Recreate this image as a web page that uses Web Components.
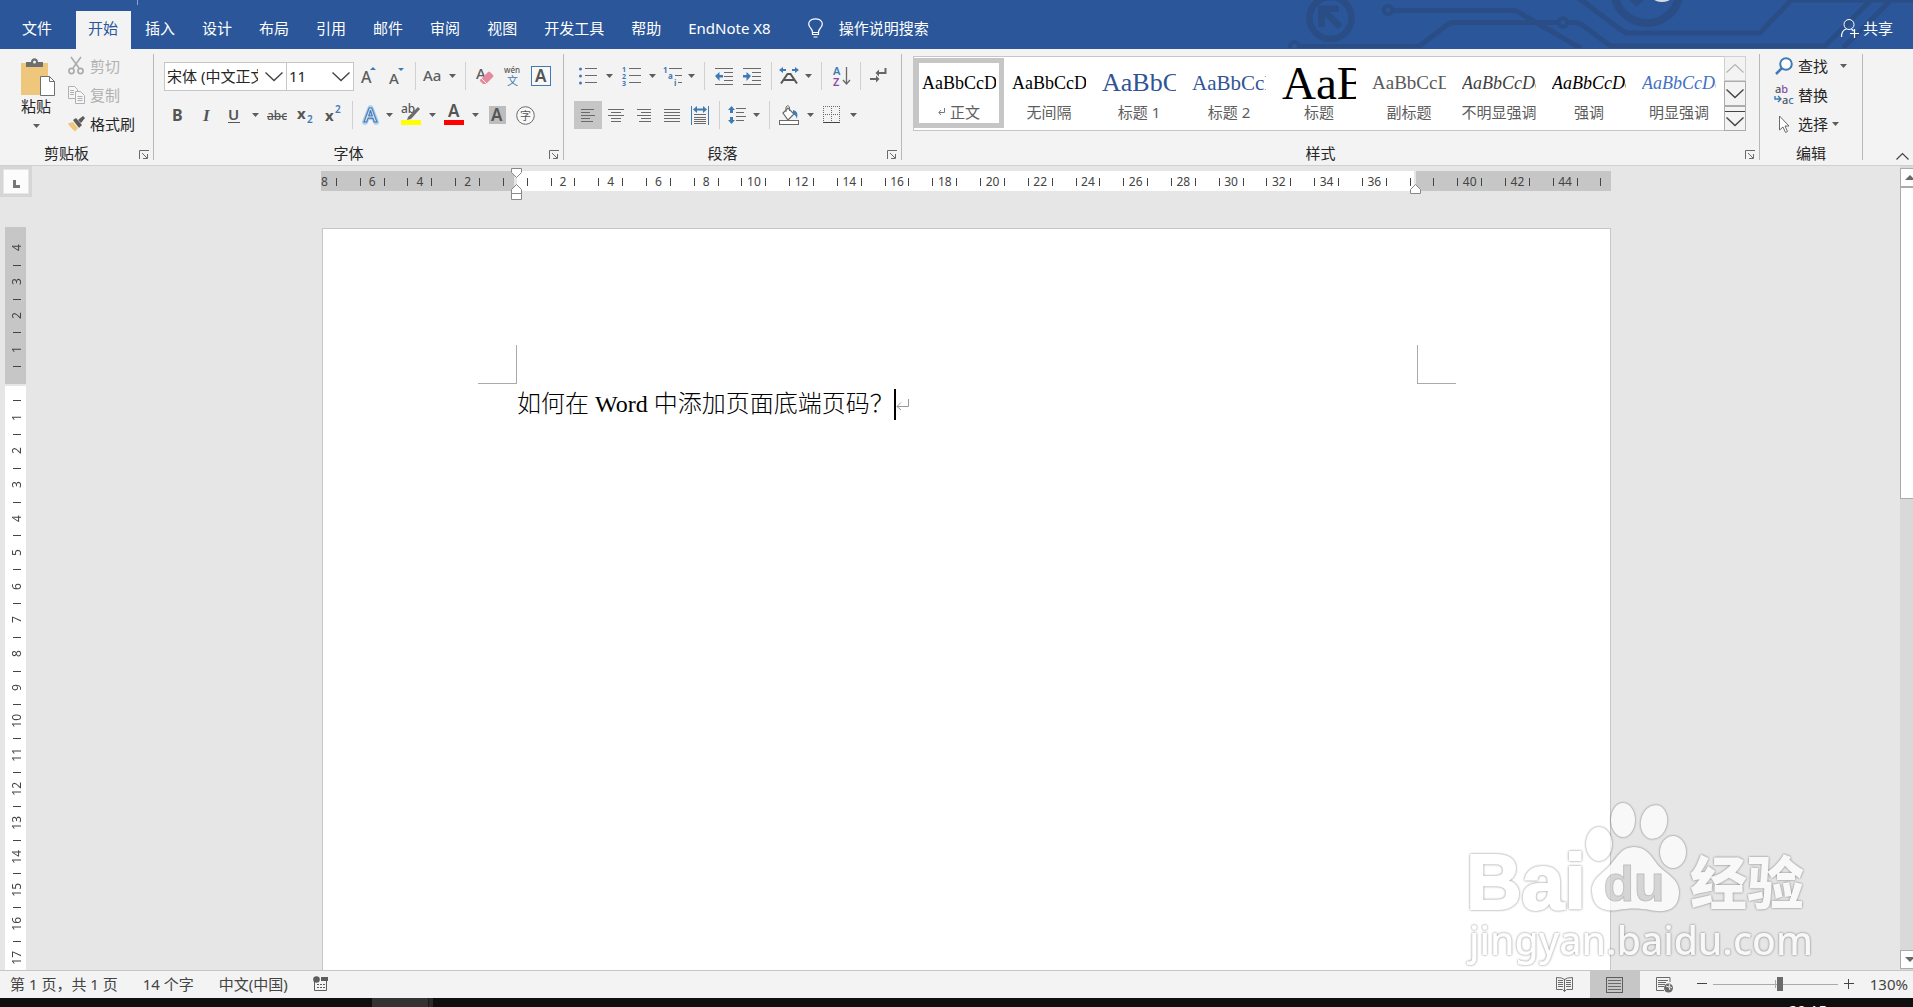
<!DOCTYPE html>
<html lang="zh-CN">
<head>
<meta charset="utf-8">
<title>Word</title>
<style>
  html, body { margin: 0; height: 100%; }
  body {
    font: 15px/20px "Noto Sans", "Noto Sans CJK SC", sans-serif;
    color: #262626;
    overflow: hidden;
  }
</style>
</head>
<body>
<word-app></word-app>

<script>
const define = (name, css, html, setup) => {
  const tpl = document.createElement('template');
  tpl.innerHTML = `<style>*{box-sizing:border-box}
    button,select,input{font:inherit;color:inherit;margin:0;padding:0;border:0;background:none;border-radius:0}
    ${css}</style>${html}`;
  customElements.define(name, class extends HTMLElement {
    constructor() {
      super();
      this.attachShadow({ mode: 'open' }).append(tpl.content.cloneNode(true));
    }
    connectedCallback() { if (setup) setup(this, this.shadowRoot); }
  });
};

/* ---------- icons: [width, height, markup] ---------- */
const F = 'font-family="Noto Sans, sans-serif"';
const lines = (list, c = '#6a6a6a') => list.map(([x1, x2, y]) =>
  `<path d="M${x1} ${y}.5H${x2}" stroke="${c}" stroke-width="1"/>`).join('');
const ICONS = {
  paste: [34, 38, `<path d="M0 5h27v32H0z" fill="#eec77d"/><path d="M5 9V4h5c0-5 7-5 7 0h5v5z" fill="#6f6f6f"/><circle cx="13.500" cy="4" r="1.500" fill="#f3f3f3"/><path d="M19.500 18.500h9l5 5v14h-14z" fill="#fff" stroke="#6f6f6f"/><path d="M28.500 18.500v5h5" fill="none" stroke="#6f6f6f"/>`],
  cut: [16, 18, `<g fill="none" stroke="#ababab" stroke-width="1.600"><path d="M3 0l8 11M13 0L5 11"/><circle cx="3.500" cy="14" r="2.600"/><circle cx="12.500" cy="14" r="2.600"/></g>`],
  copy: [17, 18, `<g fill="#f6f6f6" stroke="#b2aeb4"><path d="M.5.5h6l3 3v9h-9z"/><path d="M7.500 5.500h5l4 4v8h-9z"/><path d="M2 4.500h4M2 6.500h4M2 8.500h4M9.500 10.500h5M9.500 12.500h5M9.500 14.500h5"/></g>`],
  brush: [17, 16, `<path d="M1 7l5-1 5 5-4 4.500Q3 12 0 8z" fill="#eec77d"/><path d="M5 4l3-2 6 7-3 3z" fill="#5b5b5b"/><path d="M10 4l5-4 2 2-4 5z" fill="#5b5b5b"/><path d="M5.500 6.500l5 5.500" stroke="#f3f3f3" stroke-width="1"/>`],
  grow: [16, 18, `<text x="1" y="16" font-size="16" font-weight="500" ${F} fill="#5d5d5d">A</text><path d="M10 3h6l-3-3z" fill="#3f7ab5"/>`],
  shrink: [16, 18, `<text x="1" y="17" font-size="15" font-weight="500" ${F} fill="#5d5d5d">A</text><path d="M10 1h6l-3 3z" fill="#3f7ab5"/>`],
  cases: [20, 18, `<text x="0" y="14" font-size="15" font-weight="500" ${F} fill="#5d5d5d">Aa</text>`],
  eraser: [18, 20, `<text x="0" y="13" font-size="15" font-weight="500" ${F} fill="#5d5d5d">A</text><path d="M5 13l7-7q1-1 2 0l3 3q1 1 0 2l-7 7H7l-3-3q-1-1 1-2z" fill="#e58a9e"/><path d="M5 12l6 6" stroke="#f3f3f3"/>`],
  phonetic: [18, 20, `<text x="0" y="7" font-size="8" ${F} font-weight="500" fill="#555">wén</text><text x="3" y="19" font-size="11" font-family="Noto Sans CJK SC, sans-serif" fill="#3f7ab5">文</text>`],
  charborder: [20, 20, `<rect x=".5" y=".5" width="19" height="19" fill="#f8f8f8" stroke="#3f7ab5"/><text x="4" y="16" font-size="17" font-weight="600" ${F} fill="#555">A</text>`],
  bold: [12, 16, `<text x="0" y="14" font-size="16" font-weight="700" ${F} fill="#555">B</text>`],
  italic: [12, 16, `<text x="3" y="14" font-size="17" font-weight="700" font-style="italic" font-family="Liberation Serif, serif" fill="#555">I</text>`],
  underline: [12, 18, `<text x="0" y="14" font-size="15" font-weight="600" ${F} fill="#555">U</text><path d="M0 16.500h12" stroke="#555"/>`],
  strike: [20, 16, `<text x="0" y="13" font-size="12" font-weight="500" ${F} fill="#555">abc</text><path d="M0 9.500h20" stroke="#555"/>`],
  sub: [17, 20, `<text x="0" y="14" font-size="15" font-weight="700" ${F} fill="#555">x</text><text x="10" y="18" font-size="10" font-weight="600" ${F} fill="#3f7ab5">2</text>`],
  sup: [17, 20, `<text x="0" y="16" font-size="15" font-weight="700" ${F} fill="#555">x</text><text x="10" y="8" font-size="10" font-weight="600" ${F} fill="#3f7ab5">2</text>`],
  effect: [18, 20, `<path d="M4 17L9.500 3 15 17M6 12h7" fill="none" stroke="#b4d2ec" stroke-width="6" stroke-linejoin="round" stroke-linecap="round"/><text x="3" y="17" font-size="19" font-weight="600" ${F} fill="#fff" stroke="#3f7ab5" stroke-width="1.200">A</text>`],
  highlight: [20, 22, `<text x="0" y="9" font-size="12" font-weight="500" ${F} fill="#555">ab</text><path d="M17 3l2 2-9 10-4 1 1-3z" fill="#6b6b6b"/><path d="M0 16h20v5H0z" fill="#ff0"/>`],
  fontcolor: [20, 22, `<text x="4" y="13" font-size="17" font-weight="600" ${F} fill="#555">A</text><path d="M0 16h20v5H0z" fill="#f00"/>`],
  shade: [17, 18, `<path d="M0 0h17v18H0z" fill="#bdbdbd"/><text x="2" y="15" font-size="17" font-weight="600" ${F} fill="#555">A</text>`],
  circled: [19, 19, `<circle cx="9.500" cy="9.500" r="8.800" fill="#f8f8f8" stroke="#6a6a6a"/><text x="4" y="14" font-size="11" font-family="Noto Sans CJK SC, sans-serif" fill="#555">字</text>`],
  bullets: [18, 18, `<g fill="#3f7ab5"><circle cx="1.500" cy="2" r="1.500"/><circle cx="1.500" cy="9" r="1.500"/><circle cx="1.500" cy="16" r="1.500"/></g>${lines([[6, 18, 1], [6, 18, 8], [6, 18, 15]])}`],
  numbers: [19, 19, `<g font-size="7" font-weight="700" ${F} fill="#3f7ab5"><text x="0" y="5">1</text><text x="0" y="12">2</text><text x="0" y="19">3</text></g>${lines([[7, 19, 1], [7, 19, 8], [7, 19, 15]])}`],
  multi: [19, 19, `<g font-size="8" font-weight="700" ${F} fill="#3f7ab5"><text x="0" y="6">1</text><text x="5" y="12">a</text><text x="11" y="19">i</text></g>${lines([[6, 19, 1], [12, 19, 8], [15, 19, 15]])}`],
  outdent: [18, 17, lines([[0, 18, 0], [9, 18, 4], [9, 18, 8], [9, 18, 12], [0, 18, 16]]) + `<path d="M0 8l4.500-4v3H8v2.500H4.500V13z" fill="#3f7ab5"/>`],
  indent: [18, 17, lines([[0, 18, 0], [9, 18, 4], [9, 18, 8], [9, 18, 12], [0, 18, 16]]) + `<path d="M8 8L3.500 4v3H0v2.500h3.500V13z" fill="#3f7ab5"/>`],
  scale: [20, 18, `<path d="M0 3l4-3v2h3v2H4v2zM20 3l-4-3v2h-3v2h3v2z" fill="#3f7ab5"/><path d="M2 16.500L8.500 7h3L18 16.500M5 13h10" fill="none" stroke="#555" stroke-width="2"/>`],
  sort: [17, 19, `<text x="0" y="8" font-size="11" font-weight="600" ${F} fill="#3f7ab5">A</text><text x="0" y="19" font-size="11" font-weight="600" ${F} fill="#8a4ba8">Z</text><path d="M13.500 0v17M10 13l3.500 4 3.500-4" fill="none" stroke="#6a6a6a" stroke-width="1.300"/>`],
  marks: [17, 16, `<path d="M15.500 0v5H9M0 11h7" fill="none" stroke="#666" stroke-width="2"/><path d="M9 1.500v7L5.500 5zM6 7.500v7L9.500 11z" fill="#666"/>`],
  left: [16, 13, lines([[1, 14, 0], [1, 10, 3], [1, 15, 6], [1, 10, 9], [1, 13, 12]])],
  center: [16, 13, lines([[0, 16, 0], [3, 13, 3], [0, 16, 6], [3, 13, 9], [3, 13, 12]])],
  right: [16, 13, lines([[1, 15, 0], [5, 15, 3], [1, 15, 6], [5, 15, 9], [3, 15, 12]])],
  justify: [16, 13, lines([[0, 16, 0], [0, 16, 3], [0, 16, 6], [0, 16, 9], [0, 16, 12]])],
  distribute: [18, 19, `<path d="M.5 0v19M17.500 0v19" stroke="#3f7ab5"/><path d="M2 3.500L6 0v2.500h6V0l4 3.500L12 7V4.500H6V7z" fill="#3f7ab5"/>${lines([[3, 15, 8], [3, 15, 11], [3, 15, 13], [3, 15, 15], [3, 15, 17]])}`],
  spacing: [18, 18, `<path d="M3.500 0l3.500 4H5v3H2V4H0zM3.500 18L0 14h2v-3h3v3h2z" fill="#3f7ab5"/>${lines([[8, 18, 2], [8, 16, 6], [8, 18, 10], [8, 16, 14]])}`],
  bucket: [20, 20, `<path d="M4 8l5-5 6 6-6 6z" fill="#fff" stroke="#6a6a6a" stroke-width="1.200"/><path d="M7 7V2q2-3 3.500 0v4" fill="none" stroke="#6a6a6a"/><path d="M14 5q6 1 4 9-1-4-4-5z" fill="#3f7ab5"/><rect x=".5" y="15.500" width="19" height="4" fill="#fff" stroke="#6a6a6a"/>`],
  borders: [18, 18, `<path d="M.5 0v17M8.500 0v17M16.500 0v17M0 .5h17M0 8.500h17" stroke="#6a6a6a" stroke-dasharray="1 1"/><path d="M0 16.500h17" stroke="#444"/>`],
  find: [18, 18, `<circle cx="11" cy="7" r="5.800" fill="#fff" stroke="#3f7ab5" stroke-width="2"/><path d="M7 11l-6 6" stroke="#3f7ab5" stroke-width="2.500"/>`],
  replace: [20, 20, `<text x="1" y="8" font-size="11" font-weight="500" ${F} fill="#555">a<tspan fill="#8a4ba8">b</tspan></text><text x="8" y="19" font-size="11" font-weight="500" ${F} fill="#555">a<tspan fill="#3f7ab5">c</tspan></text><path d="M1 11v3h5M4 11l3 3-3 3" fill="none" stroke="#3f7ab5" stroke-width="1.400"/>`],
  select: [20, 19, `<path d="M5.500 1v14l3.500-3 2.500 5.500 2-1L11 11h4z" fill="#fff" stroke="#6a6a6a"/>`],
  launcher: [10, 9, `<path d="M.5 9V.5H10M3 3l5 5M8.500 4v4.500H4" fill="none" stroke="#6a6a6a"/>`],
  caret: [7, 4, `<path d="M0 0h7L3.500 4z" fill="#5d5d5d"/>`],
  up: [18, 9, `<path d="M.5 8.500L9 .5l8.500 8" fill="none" stroke="#b5b5b5" stroke-width="1.200"/>`],
  down: [18, 9, `<path d="M.5.5l8.500 8 8.500-8" fill="none" stroke="#444" stroke-width="1.400"/>`],
  more: [20, 16, `<path d="M0 .5h20" stroke="#444"/><path d="M1.500 6.500l8.500 8 8.500-8" fill="none" stroke="#444" stroke-width="1.400"/>`],
  collapse: [13, 7, `<path d="M.5 6.500l6-6 6 6" fill="none" stroke="#444" stroke-width="1.200"/>`],
  bulb: [15, 20, `<path d="M4.500 14.500q0-2.500-2-4.500C-1.500 5 2 .8 7.500.8S16.500 5 12.500 10q-2 2-2 4.500zM4.500 14.500v2h6v-2M5.500 19h4" fill="none" stroke="#fff" stroke-width="1.200"/>`],
  share: [18, 19, `<circle cx="8" cy="5.500" r="5" fill="none" stroke="#fff"/><path d="M.5 18q0-7 5-8M10.500 10l2 2M9 14.500h9M13.500 10v9" fill="none" stroke="#fff" stroke-width="1.200"/>`],
  macro: [15, 15, `<path d="M1.500 4v10.500h12V4" fill="none" stroke="#5d5d5d"/><path d="M8 1h7v4H8z" fill="#5d5d5d"/><circle cx="3.500" cy="3.500" r="3.300" fill="#5d5d5d"/><path d="M4 8.500h8M4 11.500h8" stroke="#5d5d5d" stroke-dasharray="2 1"/>`],
  read: [17, 16, `<path d="M8.500 2.500q-2-2-8-2v12h6l2 2 2-2h6V.5q-6 0-8 2zM8.500 2v13" fill="none" stroke="#6a6a6a"/>${lines([[2, 7, 3], [2, 7, 5], [2, 7, 7], [2, 7, 9], [10, 15, 3], [10, 15, 5], [10, 15, 7], [10, 15, 9]])}`],
  print: [17, 16, `<rect x=".5" y=".5" width="16" height="15" fill="none" stroke="#5d5d5d"/>${lines([[2, 15, 3], [2, 15, 6], [2, 15, 9], [2, 15, 12]])}`],
  web: [18, 16, `<path d="M14 5V.5H.5v13H8" fill="none" stroke="#6a6a6a"/>${lines([[2, 12, 3], [2, 10, 5], [2, 9, 7], [2, 8, 9]])}<circle cx="12.500" cy="11" r="4.500" fill="#6a6a6a"/><path d="M10 9l3 1 1 3M14 7l-1 2 3 2" stroke="#f3f3f3" fill="none"/>`],
  minus: [10, 10, `<path d="M0 4.500h10" stroke="#444"/>`],
  plus: [10, 10, `<path d="M0 4.500h10M4.500 0v10" stroke="#444"/>`],
  enter: [13, 11, `<path d="M12.500 0v7.500H1M5 3.500l-4 4 4 3.500" fill="none" stroke="#999"/>`],
  smallenter: [7, 8, `<path d="M6.500 0v4.500H1M3 2L.8 4.500 3 7" fill="none" stroke="#777"/>`],
  scrollup: [10, 5, `<path d="M0 5h10L5 0z" fill="#6a6a6a"/>`],
  scrolldown: [10, 5, `<path d="M0 0h10L5 5z" fill="#6a6a6a"/>`],
  tab: [7, 8, `<path d="M1.500 0v6.500H7" fill="none" stroke="#777" stroke-width="3"/>`],
  firstline: [11, 10, `<path d="M.5.500h10v4l-5 5-5-5z" fill="#fff" stroke="#888"/>`],
  hanging: [11, 16, `<path d="M.5 9.500v-4l5-5 5 5v4zM.5 9.500h10v6H.5z" fill="#fff" stroke="#888"/>`],
  rightindent: [11, 10, `<path d="M.5 9.500v-4l5-5 5 5v4z" fill="#fff" stroke="#888"/>`]
};

define('word-icon', `:host{display:inline-flex;flex:none} svg{display:block;overflow:visible}`, '', (el, root) => {
  const [w, h, body] = ICONS[el.getAttribute('name')];
  root.innerHTML += `<svg width="${w}" height="${h}" viewBox="0 0 ${w} ${h}" aria-hidden="true">${body}</svg>`;
});

/* square tool button; "menu" adds the drop-down half */
define('tool-button', `
  :host{display:flex;flex:none;height:28px}
  button{display:flex;align-items:center;justify-content:center;height:100%}
  .main{width:28px}
  :host([narrow]) .main{width:24px}
  :host([active]) .main{background:#c6c6c6}
  .drop{width:15px}
  :host(:not([menu])) .drop{display:none}
`, `<button class="main"></button><button class="drop" aria-label="更多"><word-icon name="caret"></word-icon></button>`, (el, root) => {
  const b = root.querySelector('.main');
  b.innerHTML = `<word-icon name="${el.getAttribute('icon')}"></word-icon>`;
  b.setAttribute('aria-label', el.getAttribute('label') || el.getAttribute('icon'));
});

define('tool-divider', `:host{display:block;flex:none;width:11px;height:28px;padding-left:5px} i{display:block;width:1px;height:100%;background:#d0d0d0}`, `<i></i>`);

define('tool-row', `:host{display:flex;height:28px;align-items:center}`, `<slot></slot>`);

/* icon with a caption beside it */
define('label-button', `
  :host{display:block;height:20px}
  button{display:flex;align-items:center;height:100%;white-space:nowrap}
  .ico{display:flex;justify-content:center;width:20px;margin-right:4px}
  .arrow{display:flex;padding-left:4px}
  :host([wide]) .arrow{padding-left:12px}
  :host(:not([menu])) .arrow{display:none}
  :host([off]) button{color:#b1b1b1}
`, `<button><span class="ico"></span><slot></slot><span class="arrow"><word-icon name="caret"></word-icon></span></button>`, (el, root) => {
  root.querySelector('.ico').innerHTML = `<word-icon name="${el.getAttribute('icon')}"></word-icon>`;
  root.querySelector('button').disabled = el.hasAttribute('off');
});

define('combo-box', `
  :host{display:flex;flex:none;position:relative;height:29px;background:#fff;border:1px solid #c6c6c6}
  select{appearance:none;width:100%;height:100%;padding:0 28px 0 2px;outline:0;white-space:nowrap;overflow:hidden;text-overflow:clip}
  word-icon{position:absolute;right:3px;top:9px;pointer-events:none}
`, `<select></select><word-icon name="down"></word-icon>`, (el, root) => {
  const s = root.querySelector('select');
  s.setAttribute('aria-label', el.getAttribute('label'));
  s.innerHTML = `<option>${el.getAttribute('value')}</option>`;
});

define('ribbon-group', `
  :host{display:flex;flex-direction:column;height:116px;position:relative;padding-right:1px;
    background:linear-gradient(#b8b8b8,#b8b8b8) right 5px/1px 106px no-repeat}
  .body{flex:1;min-height:0;padding:13px 0 0 10px}
  footer{display:flex;align-items:center;height:22px;margin-bottom:1px}
  footer span{flex:1;text-align:center}
  footer button{display:flex;width:20px;padding:3px 0 0 6px}
  :host([plain]) footer button{display:none}
`, `<div class="body"><slot></slot></div><footer><span></span><button aria-label="对话框启动器"><word-icon name="launcher"></word-icon></button></footer>`,
(el, root) => { root.querySelector('span').textContent = el.getAttribute('label'); });

define('clipboard-tools', `
  :host{display:flex;margin-top:-6px}
  .paste{display:flex;flex-direction:column;align-items:center;width:40px;height:78px;padding-top:2px;margin-left:8px}
  .paste span{line-height:20px;margin:0 4px 8px 0}
  .paste .a{display:flex;margin-right:4px}
  .side{display:flex;flex-direction:column;gap:9px;margin-left:8px}
`, `<button class="paste"><word-icon name="paste"></word-icon><span>粘贴</span><div class="a"><word-icon name="caret"></word-icon></div></button>
<div class="side"><label-button icon="cut" off>剪切</label-button><label-button icon="copy" off>复制</label-button><label-button icon="brush">格式刷</label-button></div>`);

define('font-tools', `
  :host{display:flex;flex-direction:column;gap:11px}
  .name{width:123px}.size{width:68px;margin-left:-1px}
`, `<tool-row><combo-box class="name" label="字体" value="宋体 (中文正文)"></combo-box><combo-box class="size" label="字号" value="11"></combo-box>
<tool-button icon="grow" label="增大字号"></tool-button><tool-button icon="shrink" label="减小字号"></tool-button><tool-divider></tool-divider>
<tool-button icon="cases" narrow menu label="更改大小写"></tool-button><tool-divider></tool-divider>
<tool-button icon="eraser" label="清除格式"></tool-button><tool-button icon="phonetic" label="拼音指南"></tool-button><tool-button icon="charborder" label="字符边框"></tool-button></tool-row>
<tool-row><tool-button icon="bold" label="加粗"></tool-button><tool-button icon="italic" label="倾斜"></tool-button><tool-button icon="underline" menu label="下划线"></tool-button>
<tool-button icon="strike" label="删除线"></tool-button><tool-button icon="sub" label="下标"></tool-button><tool-button icon="sup" label="上标"></tool-button><tool-divider></tool-divider>
<tool-button icon="effect" narrow menu label="文本效果"></tool-button><tool-button icon="highlight" menu label="突出显示"></tool-button><tool-button icon="fontcolor" menu label="字体颜色"></tool-button>
<tool-button icon="shade" label="字符底纹"></tool-button><tool-button icon="circled" label="带圈字符"></tool-button></tool-row>`);

define('paragraph-tools', `:host{display:flex;flex-direction:column;gap:11px}`, `
<tool-row><tool-button icon="bullets" menu label="项目符号"></tool-button><tool-button icon="numbers" menu label="编号"></tool-button><tool-button icon="multi" narrow menu label="多级列表"></tool-button><tool-divider></tool-divider>
<tool-button icon="outdent" label="减少缩进量"></tool-button><tool-button icon="indent" label="增加缩进量"></tool-button><tool-divider></tool-divider>
<tool-button icon="scale" narrow menu label="中文版式"></tool-button><tool-divider></tool-divider><tool-button icon="sort" label="排序"></tool-button><tool-divider></tool-divider><tool-button icon="marks" narrow label="显示编辑标记"></tool-button></tool-row>
<tool-row><tool-button icon="left" active label="左对齐"></tool-button><tool-button icon="center" label="居中"></tool-button><tool-button icon="right" label="右对齐"></tool-button><tool-button icon="justify" label="两端对齐"></tool-button><tool-button icon="distribute" label="分散对齐"></tool-button><tool-divider></tool-divider>
<tool-button icon="spacing" narrow menu label="行距"></tool-button><tool-divider></tool-divider><tool-button icon="bucket" menu label="底纹"></tool-button><tool-button icon="borders" menu label="边框"></tool-button></tool-row>`);

define('style-card', `
  :host{display:block;flex:0 0 90px;width:90px;height:70px}
  button{display:flex;flex-direction:column;width:90px;height:100%;padding:8px 8px 0;text-align:left}
  :host([active]) button{border:5px solid #c6c6c6;padding:3px 3px 0}
  .view{display:block;height:34px;overflow:hidden;white-space:nowrap;width:100%;
    font-family:"Liberation Serif",serif;font-size:var(--size,18px);color:var(--ink,#000);font-style:var(--slant,normal);line-height:34px}
  .name{display:flex;align-items:center;justify-content:center;gap:5px;width:100%;height:22px;margin-top:1px;color:#5d5d5d;white-space:nowrap}
`, `<button><span class="view">AaBbCcDd</span><span class="name"><slot></slot></span></button>`);

define('style-gallery', `
  :host{display:flex;height:75px;margin:-6px 13px 0 1px;border:1px solid #c6c6c6;background:#fff}
  .cards{display:flex;flex:1;min-width:0;overflow:hidden;padding-top:1px}
  .nav{display:flex;flex-direction:column;flex:0 0 21px;margin:-1px;background:#f3f3f3}
  .nav button{display:flex;flex:1;align-items:center;justify-content:center;border:1px solid #ababab}
  .nav button:first-child{border-color:#d0d0d0}
`, `<div class="cards">
<style-card active><word-icon name="smallenter"></word-icon>正文</style-card><style-card>无间隔</style-card>
<style-card style="--size:26px;--ink:#2f5496">标题 1</style-card><style-card style="--size:21px;--ink:#2f5496">标题 2</style-card>
<style-card style="--size:47px">标题</style-card><style-card style="--size:19px;--ink:#5a5a5a">副标题</style-card>
<style-card style="--ink:#404040;--slant:italic">不明显强调</style-card><style-card style="--slant:italic">强调</style-card>
<style-card style="--ink:#4472c4;--slant:italic">明显强调</style-card></div>
<div class="nav"><button aria-label="上一行"><word-icon name="up"></word-icon></button><button aria-label="下一行"><word-icon name="down"></word-icon></button><button aria-label="其他"><word-icon name="more"></word-icon></button></div>`);

define('edit-tools', `:host{display:flex;flex-direction:column;gap:9px;margin:-6px 0 0 4px}`,
`<label-button icon="find" menu wide>查找</label-button><label-button icon="replace">替换</label-button><label-button icon="select" menu>选择</label-button>`);

define('word-ribbon', `
  :host{display:flex;flex:none;height:117px;background:#f3f3f3;border-bottom:1px solid #d0d0d0}
  .clip{width:154px}.font{width:410px}.para{width:338px}.styles{flex:1;min-width:0}.edit{width:103px}
  .end{display:flex;align-items:flex-end;justify-content:flex-end;width:50px;padding:0 4px 5px 0}
  button{display:flex}
`, `<ribbon-group class="clip" label="剪贴板"><clipboard-tools></clipboard-tools></ribbon-group>
<ribbon-group class="font" label="字体"><font-tools></font-tools></ribbon-group>
<ribbon-group class="para" label="段落"><paragraph-tools></paragraph-tools></ribbon-group>
<ribbon-group class="styles" label="样式"><style-gallery></style-gallery></ribbon-group>
<ribbon-group class="edit" label="编辑" plain><edit-tools></edit-tools></ribbon-group>
<div class="end"><button aria-label="折叠功能区"><word-icon name="collapse"></word-icon></button></div>`);

define('title-bar', `
  :host{display:flex;flex:none;position:relative;height:49px;padding:11px 20px 0 0;background:#2b579a;color:#fff;overflow:hidden}
  svg.art{position:absolute;right:0;top:0}
  .notch{position:absolute;left:137px;top:0;width:1px;height:5px;background:#8aa5cf}
  nav{display:flex;gap:2px;position:relative}
  nav a{color:inherit;text-decoration:none;padding:6px 13px 0 12px;line-height:22px;white-space:nowrap}
  nav a.file{padding:6px 22px 0 22px}
  nav a.on{background:#f3f3f3;color:#2b579a}
  button{display:flex;position:relative;height:34px;align-items:center;gap:4px;line-height:22px}
  .tell{gap:16px;margin-left:24px}
  .share{margin-left:auto}
`, `<svg class="art" width="633" height="48" viewBox="1280 0 633 48" fill="none" stroke="#2a4d85" stroke-width="5" aria-hidden="true">
<circle cx="1330.500" cy="18" r="21" stroke-width="6.500"/><path d="M1318 27V5.500h21v6.500h-9.500l13 12.500-4.500 4.500-13-12.500V27z" fill="#2a4d85" stroke="none"/>
<circle cx="1388" cy="10" r="4.200" stroke-width="4"/><path d="M1393 10.500h119q4 0 7 2l62 36"/>
<circle cx="1294.500" cy="46.500" r="4.500" stroke-width="4"/><path d="M1300 46.500h119l26-20q4-4 9-4h104"/><circle cx="1563" cy="22.500" r="4.200" stroke-width="4"/>
<path d="M1568 22.500h6q5 0 9 3l26 19.500q2 1 5 1h211l50-50M1576-4l45 34q4 3 8 3h131l31-33h125M1843 48l52-52"/>
<circle cx="1647" cy="-10" r="33" stroke-width="8"/><path d="M1629 0l8 7 7-7z" fill="#2a4d85" stroke="none"/><ellipse cx="1662" cy="-1" rx="8" ry="3" fill="#d8dce0" stroke="none"/></svg>
<i class="notch"></i>
<nav><a class="file" href="#">文件</a><a class="on" href="#">开始</a><a href="#">插入</a><a href="#">设计</a><a href="#">布局</a><a href="#">引用</a><a href="#">邮件</a><a href="#">审阅</a><a href="#">视图</a><a href="#">开发工具</a><a href="#">帮助</a><a href="#">EndNote X8</a></nav>
<button class="tell"><word-icon name="bulb"></word-icon><span>操作说明搜索</span></button>
<button class="share"><word-icon name="share"></word-icon><span>共享</span></button>`);

define('h-ruler', `
  :host{display:block;position:relative;height:20px;font-size:12px;line-height:22px;color:#444}
  .band{height:20px;overflow:hidden;
    background:linear-gradient(90deg,#c6c6c6 193px,#e6e6e6 193px 196px,#fff 196px calc(100% - 197px),#e6e6e6 calc(100% - 197px) calc(100% - 195px),#c6c6c6 calc(100% - 195px))}
  .track{display:flex;margin:0 -13px 0 -9px}
  .track span{flex:1 1 0;min-width:0;height:20px;padding-left:1px;text-align:center;background:linear-gradient(#444,#444) 0 7px/1px 8px no-repeat}
  .m{position:absolute}
  .first{left:190px;top:-3px}.hang{left:190px;top:13px}.right{right:190px;top:13px}
`, `<div class="band"><div class="track"></div></div><word-icon class="m first" name="firstline"></word-icon><word-icon class="m hang" name="hanging"></word-icon><word-icon class="m right" name="rightindent"></word-icon>`, (el, root) => {
  let out = '';
  for (let n = -8; n <= 46; n++) out += `<span>${n && n % 2 === 0 && n !== 38 && n !== 46 ? Math.abs(n) : ''}</span>`;
  root.querySelector('.track').innerHTML = out;
});

define('v-ruler', `
  :host{display:flex;flex-direction:column;min-height:0;overflow:hidden;width:21px;padding-top:4px;font-size:12px;color:#444;
    background:linear-gradient(#c6c6c6 157px,#e6e6e6 157px 159px,#fff 159px)}
  .track{display:flex;flex-direction:column;flex:1;margin-bottom:-5px;padding-left:2px}
  .track span{display:flex;flex:1 1 0;min-height:0;align-items:center;justify-content:center;background:linear-gradient(#444,#444) 6px 0/8px 1px no-repeat}
  .track span:first-child{background:none}
  b{font-weight:400;writing-mode:vertical-rl;transform:rotate(180deg);line-height:18px}
`, `<div class="track"></div>`, (el, root) => {
  let out = '';
  for (let n = -4; n <= 17; n++) out += `<span><b>${n ? Math.abs(n) : ''}</b></span>`;
  root.querySelector('.track').innerHTML = out;
});

define('doc-page', `
  :host{display:flex;flex-direction:column;background:#fff;border:1px solid #c6c6c6;border-bottom:0;padding-top:116px}
  .marks{display:flex;justify-content:space-between;padding:0 154px 0 155px}
  .marks i{width:39px;height:39px;border-bottom:1px solid #aaa}
  .marks i:first-child{border-right:1px solid #aaa}
  .marks i:last-child{border-left:1px solid #aaa}
  p{display:flex;align-items:center;margin:0;padding:0 194px;line-height:40px;font-family:"Liberation Serif","Noto Sans CJK SC",serif;font-size:24px;font-weight:300;color:#000}
  .caret{width:2px;height:31px;background:#000}
`, `<div class="marks"><i></i><i></i></div><p><span>如何在 Word 中添加页面底端页码？</span><i class="caret"></i><word-icon name="enter"></word-icon></p>`);

define('scroll-bar', `
  :host{display:flex;flex-direction:column;background:#d9d9d9;padding:2px 0 1px;overflow:hidden}
  button{display:flex;align-items:center;flex:none;height:19px;padding-left:4px;background:#fff;border:1px solid #ababab;border-right:0}
  .thumb{flex:0 0 312px;background:#fff;border:1px solid #ababab;border-right:0}
  .space{flex:1}
`, `<button aria-label="向上滚动"><word-icon name="scrollup"></word-icon></button><div class="thumb"></div><div class="space"></div><button aria-label="向下滚动"><word-icon name="scrolldown"></word-icon></button>`);

define('baidu-mark', `
  :host{display:block;position:absolute;right:96px;bottom:0;pointer-events:none}
  svg{display:block;overflow:visible;opacity:.75;filter:drop-shadow(0 0 1px rgba(0,0,0,.4)) drop-shadow(0 0 1px rgba(0,0,0,.25))}
`, `<svg width="350" height="170" viewBox="1467 800 350 170" fill="#fff">
<text x="1466" y="909" font-size="77" font-weight="700" font-family="Liberation Sans, sans-serif" stroke="#fff" stroke-width="2">Bai</text>
<ellipse cx="1599" cy="844" rx="13" ry="17"/><ellipse cx="1623" cy="820" rx="12" ry="17"/><ellipse cx="1654" cy="822" rx="13" ry="17" transform="rotate(12 1654 822)"/><ellipse cx="1673" cy="852" rx="13" ry="16"/>
<path d="M1634 847c12 0 17 9 23 17 7 9 22 14 22 28 0 22-20 20-29 18-10-2-22-2-32 0-12 2-26-1-26-20 0-12 12-17 19-26 7-8 11-17 23-17z"/>
<text x="1634" y="901" text-anchor="middle" font-size="50" font-weight="700" font-family="Liberation Sans, sans-serif" fill="#d0d0d0" stroke="#b4b4b4">du</text>
<text x="1690" y="904" font-size="57" font-weight="900" font-family="Noto Sans CJK SC, sans-serif">经验</text>
<text x="1469" y="955" font-size="39" font-weight="500" font-family="Noto Sans, sans-serif">jingyan.baidu.com</text></svg>`);

define('work-space', `
  :host{display:grid;grid-template-columns:32px minmax(0,1fr) 13px;flex:1;min-height:0;position:relative;background:#e6e6e6;overflow:hidden}
  .side{display:flex;flex-direction:column;min-height:0}
  .corner{display:flex;flex:none;height:31px;padding:3px;background:#d6d6d6}
  .corner button{display:flex;align-items:center;justify-content:center;flex:1;background:#fcfcfc;border:1px solid #e6e6e6;padding-top:4px}
  v-ruler{flex:1;margin:30px 0 0 5px}
  .main{display:flex;flex-direction:column;width:1290px;max-width:100%;margin:5px auto 0;min-height:0}
  doc-page{flex:1;margin:37px 0 0 1px}
`, `<div class="side"><div class="corner"><button aria-label="制表符"><word-icon name="tab"></word-icon></button></div><v-ruler></v-ruler></div>
<div class="main"><h-ruler></h-ruler><doc-page></doc-page></div><scroll-bar></scroll-bar><baidu-mark></baidu-mark>`);

define('status-bar', `
  :host{display:flex;flex:none;align-items:center;height:28px;padding:0 5px 2px 10px;background:#f3f3f3;border-top:1px solid #c6c6c6;color:#444;white-space:nowrap}
  .info{display:flex;align-items:center;gap:25px}
  .info button,.view button,.zoom button{display:flex;align-items:center;justify-content:center}
  .view{display:flex;margin-left:auto;height:27px;margin-bottom:-2px}
  .view button{width:50px}
  .view .on{background:#c6c6c6}
  .zoom{display:flex;align-items:center;gap:6px;margin-left:7px}
  .zoom .pct{margin-left:10px}
  input{appearance:none;width:125px;height:16px;
    background:linear-gradient(#aaa,#aaa) 62px 4px/1px 8px no-repeat,linear-gradient(#aaa,#aaa) 0 8px/100% 1px no-repeat}
  input::-webkit-slider-thumb{appearance:none;width:6px;height:14px;background:#6a6a6a}
`, `<div class="info"><span>第 1 页，共 1 页</span><span>14 个字</span><span>中文(中国)</span><button aria-label="宏"><word-icon name="macro"></word-icon></button></div>
<div class="view"><button aria-label="阅读视图"><word-icon name="read"></word-icon></button><button class="on" aria-label="页面视图"><word-icon name="print"></word-icon></button><button aria-label="Web 版式视图"><word-icon name="web"></word-icon></button></div>
<div class="zoom"><button aria-label="缩小"><word-icon name="minus"></word-icon></button><input type="range" min="0" max="100" value="54" aria-label="显示比例"><button aria-label="放大"><word-icon name="plus"></word-icon></button><span class="pct">130%</span></div>`);

define('task-strip', `
  :host{display:flex;flex:none;height:9px;background:#0f0f0f;overflow:hidden;color:#fff;padding-left:372px;padding-right:86px}
  i{flex:0 0 56px;background:#333}
  i + i{flex-basis:5px;background:#2a2a2a;border-left:1px solid #1a1a1a}
  time{margin:2px 0 0 auto;font-size:15px}
`, `<i></i><i></i><time>20:15</time>`);

define('word-app', `:host{display:flex;flex-direction:column;height:100vh}`,
`<title-bar></title-bar><word-ribbon></word-ribbon><work-space></work-space><status-bar></status-bar><task-strip></task-strip>`);
</script>
</body>
</html>
